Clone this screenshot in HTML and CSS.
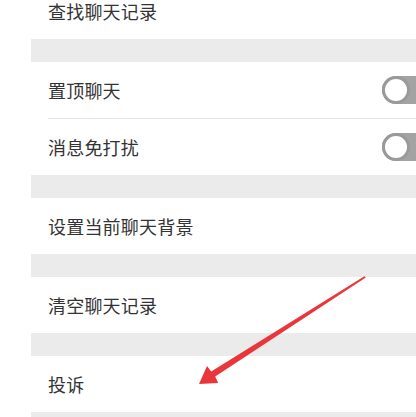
FILE: index.html
```html
<!DOCTYPE html>
<html lang="zh">
<head>
<meta charset="utf-8">
<link rel="stylesheet" href="styles.css">
</head>
<body>
<div class="screen">
  <div class="list">
    <div class="group">
      <div class="cell cell-top"><span class="label">查找聊天记录</span></div>
    </div>
    <div class="gap"></div>
    <div class="group">
      <div class="cell">
        <span class="label">置顶聊天</span>
        <span class="switch"><span class="knob"></span></span>
      </div>
      <div class="cell cell-sep">
        <span class="label">消息免打扰</span>
        <span class="switch"><span class="knob"></span></span>
      </div>
    </div>
    <div class="gap"></div>
    <div class="group">
      <div class="cell"><span class="label">设置当前聊天背景</span></div>
    </div>
    <div class="gap"></div>
    <div class="group">
      <div class="cell"><span class="label">清空聊天记录</span></div>
    </div>
    <div class="gap"></div>
    <div class="group">
      <div class="cell"><span class="label">投诉</span></div>
    </div>
    <div class="gap"></div>
  </div>
  <svg class="arrow" width="416" height="417" viewBox="0 0 416 417">
    <polygon fill="#e8363b" points="365.8,277.4 215.2,376.6 218.2,383 199,384 207,366 211.2,371.4 364.4,276.2"/>
  </svg>
</div>
</body>
</html>
```

FILE: styles.css
```css
html, body {
  margin: 0;
  padding: 0;
  background: #ffffff;
}
body {
  width: 416px;
  height: 417px;
  overflow: hidden;
  font-family: "Noto Sans CJK SC", "Noto Sans", sans-serif;
}
.screen {
  position: relative;
  width: 416px;
  height: 417px;
  overflow: hidden;
}
.list {
  margin-left: 31px;
  width: 402px;
  background: #ebebeb;
}
.group {
  background: #ffffff;
  padding-left: 17px;
}
.cell {
  height: 56px;
  display: flex;
  align-items: center;
  justify-content: space-between;
}
.cell-top {
  box-sizing: border-box;
  height: 39px;
  padding-top: 2px;
  align-items: flex-start;
}
.cell-top .label {
  line-height: 19px;
}
.cell-sep {
  border-top: 1px solid #e3e3e3;
}
.label {
  font-size: 18px;
  line-height: 22px;
  color: #333333;
  letter-spacing: 0.2px;
}
.gap {
  height: 23px;
}
.switch {
  position: relative;
  width: 51px;
  height: 28px;
  border-radius: 14px;
  background: #a3a3a3;
}
.knob {
  position: absolute;
  left: 0;
  top: 0;
  width: 28px;
  height: 28px;
  box-sizing: border-box;
  border-radius: 50%;
  background: #ffffff;
  border: 3px solid #9a9a9a;
}
.arrow {
  position: absolute;
  left: 0;
  top: 0;
}
```
